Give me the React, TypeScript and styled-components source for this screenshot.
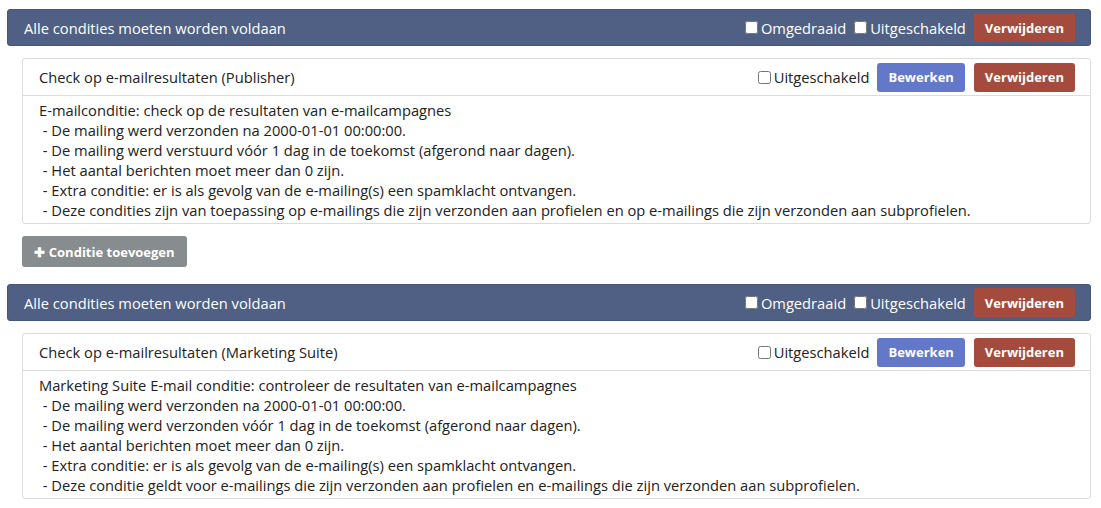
import React from "react";
import styled, { createGlobalStyle } from "styled-components";

const Global = createGlobalStyle`
  html, body { margin: 0; padding: 0; background: #fff; }
  body { font-family: "Open Sans", "Liberation Sans", sans-serif; font-size: 14.7px; color: #222; }
`;

const Page = styled.div`
  padding: 9px 10px 0 7px;
  display: flex;
  flex-direction: column;
`;

const Group = styled.section`
  display: flex;
  flex-direction: column;
`;

const GroupHeader = styled.div`
  height: 37px;
  box-sizing: border-box;
  background: #4f6084;
  border: 1px solid #46567a;
  border-radius: 3px;
  display: flex;
  align-items: center;
  padding: 0 15px 0 16px;
  color: #fff;
  font-size: 14.7px;
`;

const Title = styled.div`
  flex: 1;
`;

const Actions = styled.div`
  display: flex;
  align-items: center;
`;

const CheckLabel = styled.label<{ $light?: boolean }>`
  display: flex;
  align-items: center;
  font-size: 14.7px;
  color: ${(p) => (p.$light ? "#fff" : "#222")};
  margin-right: 8px;
  input {
    margin: 0 3px 0 0;
    width: 13px;
    height: 13px;
  }
`;

const Button = styled.button<{ $variant: "danger" | "primary" | "muted" }>`
  height: 29px;
  border: none;
  border-radius: 3px;
  padding: 0 11px;
  font-family: "Open Sans", "Liberation Sans", sans-serif;
  font-weight: 700;
  font-size: 13px;
  color: #fff;
  background: ${(p) =>
    p.$variant === "danger" ? "#a54b3d" : p.$variant === "primary" ? "#6378c9" : "#878c8e"};
  & + & {
    margin-left: 9px;
  }
`;

const Conditions = styled.div`
  margin: 12px 0 0 15px;
  display: flex;
  flex-direction: column;
`;

const Card = styled.div`
  border: 1px solid #dcdcdc;
  border-radius: 3px;
  background: #fff;
`;

const CardHeader = styled.div`
  height: 36px;
  display: flex;
  align-items: center;
  padding: 0 15px 0 16px;
  border-bottom: 1px solid #dcdcdc;
`;

const CardTitle = styled.div`
  flex: 1;
`;

const CardBody = styled.div`
  padding: 4px 16px 3px;
  line-height: 20px;
`;

const Line = styled.div`
  white-space: pre;
`;

const AddButton = styled(Button)`
  height: 31px;
  margin: 12px 0 17px;
  align-self: flex-start;
  width: 165px;
`;

type Cond = { title: string; lines: string[] };

const groups: Cond[] = [
  {
    title: "Check op e-mailresultaten (Publisher)",
    lines: [
      "E-mailconditie: check op de resultaten van e-mailcampagnes",
      " - De mailing werd verzonden na 2000-01-01 00:00:00.",
      " - De mailing werd verstuurd vóór 1 dag in de toekomst (afgerond naar dagen).",
      " - Het aantal berichten moet meer dan 0 zijn.",
      " - Extra conditie: er is als gevolg van de e-mailing(s) een spamklacht ontvangen.",
      " - Deze condities zijn van toepassing op e-mailings die zijn verzonden aan profielen en op e-mailings die zijn verzonden aan subprofielen.",
    ],
  },
  {
    title: "Check op e-mailresultaten (Marketing Suite)",
    lines: [
      "Marketing Suite E-mail conditie: controleer de resultaten van e-mailcampagnes",
      " - De mailing werd verzonden na 2000-01-01 00:00:00.",
      " - De mailing werd verzonden vóór 1 dag in de toekomst (afgerond naar dagen).",
      " - Het aantal berichten moet meer dan 0 zijn.",
      " - Extra conditie: er is als gevolg van de e-mailing(s) een spamklacht ontvangen.",
      " - Deze conditie geldt voor e-mailings die zijn verzonden aan profielen en e-mailings die zijn verzonden aan subprofielen.",
    ],
  },
];

export default function App() {
  return (
    <>
      <Global />
      <Page>
        {groups.map((c, i) => (
          <Group key={i}>
            <GroupHeader>
              <Title>Alle condities moeten worden voldaan</Title>
              <Actions>
                <CheckLabel $light>
                  <input type="checkbox" />
                  Omgedraaid
                </CheckLabel>
                <CheckLabel $light>
                  <input type="checkbox" />
                  Uitgeschakeld
                </CheckLabel>
                <Button $variant="danger">Verwijderen</Button>
              </Actions>
            </GroupHeader>
            <Conditions>
              <Card>
                <CardHeader>
                  <CardTitle>{c.title}</CardTitle>
                  <Actions>
                    <CheckLabel>
                      <input type="checkbox" />
                      Uitgeschakeld
                    </CheckLabel>
                    <Button $variant="primary">Bewerken</Button>
                    <Button $variant="danger">Verwijderen</Button>
                  </Actions>
                </CardHeader>
                <CardBody>
                  {c.lines.map((l, j) => (
                    <Line key={j}>{l}</Line>
                  ))}
                </CardBody>
              </Card>
              {i === 0 && <AddButton $variant="muted">✚ Conditie toevoegen</AddButton>}
            </Conditions>
          </Group>
        ))}
      </Page>
    </>
  );
}
